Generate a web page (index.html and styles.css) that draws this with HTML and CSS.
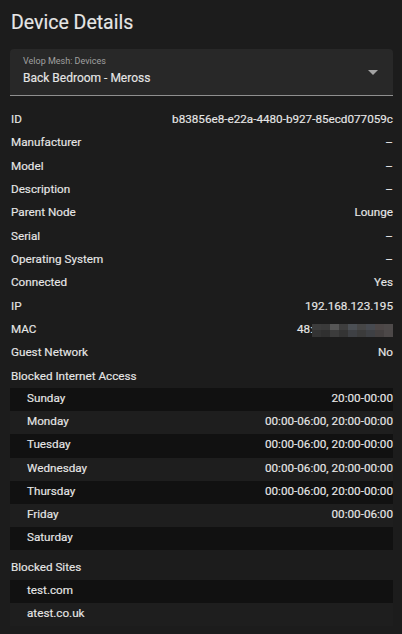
FILE: index.html
```html
<!DOCTYPE html>
<html lang="en">
<head>
<meta charset="utf-8">
<title>Device Details</title>
<link rel="stylesheet" href="styles.css">
</head>
<body>
<div class="page">
  <h1 class="title">Device Details</h1>

  <div class="select">
    <div class="select-text">
      <div class="select-label">Velop Mesh: Devices</div>
      <div class="select-value">Back Bedroom - Meross</div>
    </div>
    <svg class="select-arrow" width="10" height="5" viewBox="0 0 10 5"><path d="M0 0 L10 0 L5 5 Z" fill="#a3a3a3"/></svg>
  </div>

  <div class="details">
    <div class="row"><span class="label">ID</span><span class="value">b83856e8-e22a-4480-b927-85ecd077059c</span></div>
    <div class="row"><span class="label">Manufacturer</span><span class="value">–</span></div>
    <div class="row"><span class="label">Model</span><span class="value">–</span></div>
    <div class="row"><span class="label">Description</span><span class="value">–</span></div>
    <div class="row"><span class="label">Parent Node</span><span class="value">Lounge</span></div>
    <div class="row"><span class="label">Serial</span><span class="value">–</span></div>
    <div class="row"><span class="label">Operating System</span><span class="value">–</span></div>
    <div class="row"><span class="label">Connected</span><span class="value">Yes</span></div>
    <div class="row"><span class="label">IP</span><span class="value">192.168.123.195</span></div>
    <div class="row"><span class="label">MAC</span><span class="value mac">48:<span class="blur"><i class="c1"></i><i class="c2"></i><i class="c3"></i><i class="c4"></i><i class="c5"></i><i class="c6"></i><i class="c7"></i><i class="c8"></i><i class="c9"></i><i class="d1"></i><i class="d2"></i><i class="d3"></i><i class="d4"></i><i class="d5"></i><i class="d6"></i><i class="d7"></i><i class="d8"></i><i class="d9"></i></span></span></div>
    <div class="row"><span class="label">Guest Network</span><span class="value">No</span></div>
    <div class="row"><span class="label">Blocked Internet Access</span></div>
  </div>

  <div class="table">
    <div class="trow"><span class="tname">Sunday</span><span class="value">20:00-00:00</span></div>
    <div class="trow"><span class="tname">Monday</span><span class="value">00:00-06:00, 20:00-00:00</span></div>
    <div class="trow"><span class="tname">Tuesday</span><span class="value">00:00-06:00, 20:00-00:00</span></div>
    <div class="trow"><span class="tname">Wednesday</span><span class="value">00:00-06:00, 20:00-00:00</span></div>
    <div class="trow"><span class="tname">Thursday</span><span class="value">00:00-06:00, 20:00-00:00</span></div>
    <div class="trow"><span class="tname">Friday</span><span class="value">00:00-06:00</span></div>
    <div class="trow"><span class="tname">Saturday</span><span class="value"></span></div>
  </div>

  <div class="details sites-head">
    <div class="row"><span class="label">Blocked Sites</span></div>
  </div>

  <div class="table">
    <div class="trow"><span class="tname">test.com</span></div>
    <div class="trow"><span class="tname">atest.co.uk</span></div>
  </div>
</div>
</body>
</html>
```

FILE: styles.css
```css
html, body {
  margin: 0;
  padding: 0;
  background: #1c1c1c;
}

body {
  font-family: Roboto, "Liberation Sans", sans-serif;
  color: #e6e6e6;
  font-size: 11.7px;
  -webkit-text-stroke: 0.15px currentColor;
}

.page {
  padding: 10px 9px 0 10px;
}

.title {
  margin: 0;
  padding-left: 1px;
  font-size: 19.5px;
  font-weight: 400;
  line-height: 25px;
  color: #e6e6e6;
}

.select {
  margin-top: 14px;
  height: 46px;
  box-sizing: content-box;
  background: #282828;
  border-radius: 4px 4px 0 0;
  border-bottom: 1px solid #8f8f8f;
  display: flex;
  align-items: flex-start;
  padding: 0 15px 0 13px;
}

.select-text {
  flex: 1;
  padding-top: 7px;
}

.select-label {
  font-size: 9px;
  line-height: 11px;
  color: #a0a0a0;
  -webkit-text-stroke: 0;
}

.select-value {
  margin-top: 3px;
  font-size: 12px;
  line-height: 16px;
  color: #e6e6e6;
}

.select-arrow {
  margin-top: 21px;
  display: block;
}

.details {
  margin-top: 12px;
}

.sites-head {
  margin-top: 6px;
}

.row {
  display: flex;
  justify-content: space-between;
  line-height: 23.33px;
  height: 23.33px;
  padding-left: 1px;
}

.value {
  text-align: right;
  white-space: nowrap;
}

.mac {
  display: flex;
  align-items: center;
}

.blur {
  display: grid;
  grid-template-columns: repeat(9, 9px);
  grid-template-rows: 6.5px 6.5px;
  margin-left: -1px;
  margin-top: 1px;
}

.blur i { display: block; }
.c1 { background: #3c3c3c; }
.c2 { background: #3a3a3a; }
.c3 { background: #565656; }
.c4 { background: #3e3e3e; }
.c5 { background: #4b4f54; }
.c6 { background: #464646; }
.c7 { background: #474a50; }
.c8 { background: #4d4747; }
.c9 { background: #4e4a4a; }
.d1 { background: #343434; }
.d2 { background: #303030; }
.d3 { background: #3c3c3c; }
.d4 { background: #343434; }
.d5 { background: #3e4044; }
.d6 { background: #3b3b3b; }
.d7 { background: #3e4044; }
.d8 { background: #444040; }
.d9 { background: #4c4848; }

.table {
  display: flex;
  flex-direction: column;
}

.trow {
  display: flex;
  justify-content: space-between;
  line-height: 21px;
  height: 21px;
  padding-bottom: 2.2px;
  padding-left: 17px;
  background: #1e1e1e;
}

.trow:nth-child(odd) {
  background: #111111;
}
```
